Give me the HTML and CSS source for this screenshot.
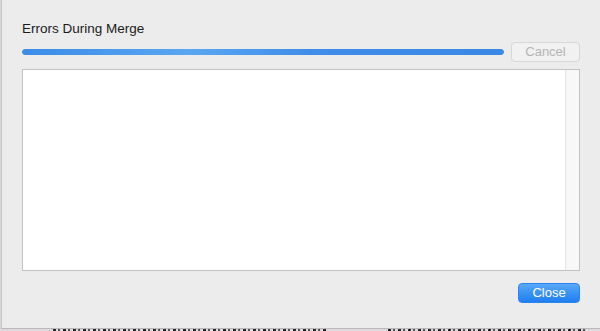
FILE: index.html
```html
<!DOCTYPE html>
<html lang="en">
<head>
    <meta charset="UTF-8">
    <meta name="viewport" content="width=device-width, initial-scale=1.0">
    <title>Errors During Merge</title>
    <link rel="stylesheet" href="styles.css">
</head>
<body>
    <div class="sheet">
        <h1 class="title">Errors During Merge</h1>
        <div class="progress-row">
            <div class="progress"><div class="progress-fill"></div></div>
            <button class="btn btn-cancel" disabled>Cancel</button>
        </div>
        <div class="log">
            <div class="log-body"></div>
            <div class="scroll-track"></div>
        </div>
        <div class="actions">
            <button class="btn btn-close">Close</button>
        </div>
    </div>
    <div class="backdrop">
        <div class="backdrop-left"></div>
        <div class="backdrop-right"></div>
    </div>
</body>
</html>
```

FILE: styles.css
```css
* {
    box-sizing: border-box;
    margin: 0;
    padding: 0;
}

body {
    width: 600px;
    height: 331px;
    overflow: hidden;
    font-family: 'Liberation Sans', Arial, sans-serif;
    font-size: 13px;
    background: #ddd8dc;
    padding-left: 1px;
}

.sheet {
    height: 329px;
    background: #ececec;
    border-left: 1px solid #c6c6c6;
    border-bottom: 1px solid #b9b9b9;
    padding: 21px 20px 0 20px;
    display: flex;
    flex-direction: column;
}

.title {
    font-size: 13.5px;
    font-weight: normal;
    line-height: 16px;
    color: #1a1a1a;
}

.progress-row {
    margin-top: 5px;
    display: flex;
    align-items: center;
    gap: 7px;
    height: 20px;
}

.progress {
    flex: 1;
    height: 6px;
    border-radius: 3px;
    background: #dcdcdc;
    overflow: hidden;
}

.progress-fill {
    width: 100%;
    height: 100%;
    border-radius: 3px;
    background: linear-gradient(to right, #3a8ce6 0%, #5aa6f2 35%, #3f8de8 60%, #3a88e6 100%);
}

.btn {
    font-family: 'Liberation Sans', Arial, sans-serif;
    font-size: 13px;
    height: 20px;
    border-radius: 4px;
    line-height: 18px;
}

.btn-cancel {
    width: 69px;
    background: #f1f1f1;
    border: 1px solid #d7d7d7;
    color: #b4b4b4;
}

.log {
    margin-top: 7px;
    height: 202px;
    border: 1px solid #c2c2c2;
    background: #ffffff;
    display: flex;
}

.log-body {
    flex: 1;
}

.scroll-track {
    width: 14px;
    background: #f8f8f8;
    border-left: 1px solid #e4e4e4;
}

.actions {
    margin-top: 12px;
    display: flex;
    justify-content: flex-end;
}

.btn-close {
    width: 62px;
    color: #ffffff;
    border: 1px solid #2a83ee;
    background: linear-gradient(to bottom, #5aa8f8 0%, #3a93f5 50%, #1f7ff0 100%);
}

/* window behind the sheet, only its top row of text peeks out */
.backdrop {
    height: 2px;
    display: flex;
    gap: 60px;
    padding-left: 52px;
}

.backdrop-left,
.backdrop-right {
    height: 2px;
    background: repeating-linear-gradient(to right, #2a2a2a 0 3px, transparent 3px 5px, #555 5px 7px, transparent 7px 10px);
}

.backdrop-left {
    width: 275px;
}

.backdrop-right {
    width: 200px;
}
```
